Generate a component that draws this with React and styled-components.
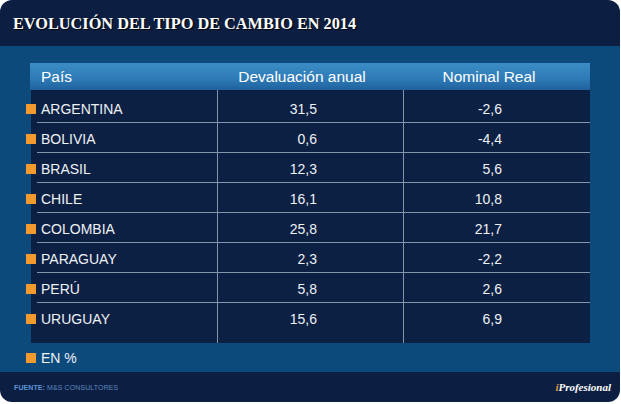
import styled, { createGlobalStyle } from 'styled-components';

const GlobalStyle = createGlobalStyle`
  body {
    margin: 0;
    background: #ffffff;
  }
`;

const LINE = '#8594ad';

const Card = styled.div`
  width: 620px;
  border-radius: 12px;
  overflow: hidden;
  background: #0c1f42;
  font-family: 'Liberation Sans', Arial, sans-serif;
`;

const TitleBar = styled.div`
  height: 46px;
  display: flex;
  align-items: center;
  padding-left: 13px;
`;

const Title = styled.h1`
  margin: 0;
  padding-top: 2px;
  font-family: 'Liberation Serif', 'Times New Roman', serif;
  font-size: 16.3px;
  font-weight: 700;
  color: #ffffff;
  text-shadow: 1px 1px 1px rgba(0, 0, 0, 0.85);
`;

const Band = styled.div`
  background: #0c4a7b;
  padding: 17px 30px 0 31px;
`;

const HeadRow = styled.div`
  display: grid;
  grid-template-columns: 186px 186px 1fr;
  height: 27px;
  margin-left: -1px;
  background: linear-gradient(to bottom, #3b8cc5 0%, #2f7cb8 55%, #1f629f 100%);
  color: #ffffff;
  font-size: 15.5px;
`;

const HeadCell = styled.div`
  display: flex;
  align-items: center;
  justify-content: ${(p) => (p.$left ? 'flex-start' : 'center')};
  padding: ${(p) => (p.$left ? '0 0 0 11px' : '0 14px 0 0')};
`;

const Body = styled.div`
  background-color: #0c2043;
  background-image: linear-gradient(
    to right,
    transparent 186px,
    ${LINE} 186px,
    ${LINE} 187px,
    transparent 187px,
    transparent 372px,
    ${LINE} 372px,
    ${LINE} 373px,
    transparent 373px
  );
  padding: 3px 0 10px;
`;

const Row = styled.div`
  display: grid;
  grid-template-columns: 180px 186px 1fr;
  height: 30px;
  margin-left: 6px;
  box-sizing: border-box;
  border-bottom: 1px solid ${(p) => (p.$last ? 'transparent' : LINE)};
  color: #eef1f6;
  font-size: 14px;
`;

const Marker = styled.span`
  width: 10px;
  height: 10px;
  background: #f29a2e;
  flex: none;
`;

const NameCell = styled.div`
  display: flex;
  align-items: center;
  gap: 5px;
  margin-left: -11px;
  padding-top: 2px;
`;

const NumCell = styled.div`
  display: flex;
  align-items: center;
  justify-content: flex-end;
  padding: 2px ${(p) => p.$pad}px 0 0;
`;

const Note = styled.div`
  display: flex;
  align-items: center;
  gap: 5px;
  height: 29px;
  margin-left: -5px;
  color: #eef1f6;
  font-size: 14px;
`;

const Footer = styled.div`
  height: 30px;
  display: flex;
  align-items: center;
  justify-content: space-between;
  padding: 0 9px 0 14px;
`;

const Source = styled.div`
  font-size: 7px;
  color: #5c86bf;
  letter-spacing: 0.1px;

  b {
    color: #5d93d6;
  }
`;

const Logo = styled.div`
  font-family: 'Liberation Serif', 'Times New Roman', serif;
  font-style: italic;
  font-weight: 700;
  font-size: 11px;
  color: #ffffff;

  span {
    color: #e8962e;
  }
`;

const rows = [
  ['ARGENTINA', '31,5', '-2,6'],
  ['BOLIVIA', '0,6', '-4,4'],
  ['BRASIL', '12,3', '5,6'],
  ['CHILE', '16,1', '10,8'],
  ['COLOMBIA', '25,8', '21,7'],
  ['PARAGUAY', '2,3', '-2,2'],
  ['PERÚ', '5,8', '2,6'],
  ['URUGUAY', '15,6', '6,9'],
];

export default function App() {
  return (
    <>
      <GlobalStyle />
      <Card>
        <TitleBar>
          <Title>EVOLUCIÓN DEL TIPO DE CAMBIO EN 2014</Title>
        </TitleBar>
        <Band>
          <HeadRow>
            <HeadCell $left>País</HeadCell>
            <HeadCell>Devaluación anual</HeadCell>
            <HeadCell>Nominal Real</HeadCell>
          </HeadRow>
          <Body>
            {rows.map(([name, dev, real], i) => (
              <Row key={name} $last={i === rows.length - 1}>
                <NameCell>
                  <Marker />
                  {name}
                </NameCell>
                <NumCell $pad={86}>{dev}</NumCell>
                <NumCell $pad={88}>{real}</NumCell>
              </Row>
            ))}
          </Body>
          <Note>
            <Marker />
            EN %
          </Note>
        </Band>
        <Footer>
          <Source>
            <b>FUENTE:</b> M&amp;S CONSULTORES
          </Source>
          <Logo>
            <span>i</span>Profesional
          </Logo>
        </Footer>
      </Card>
    </>
  );
}
